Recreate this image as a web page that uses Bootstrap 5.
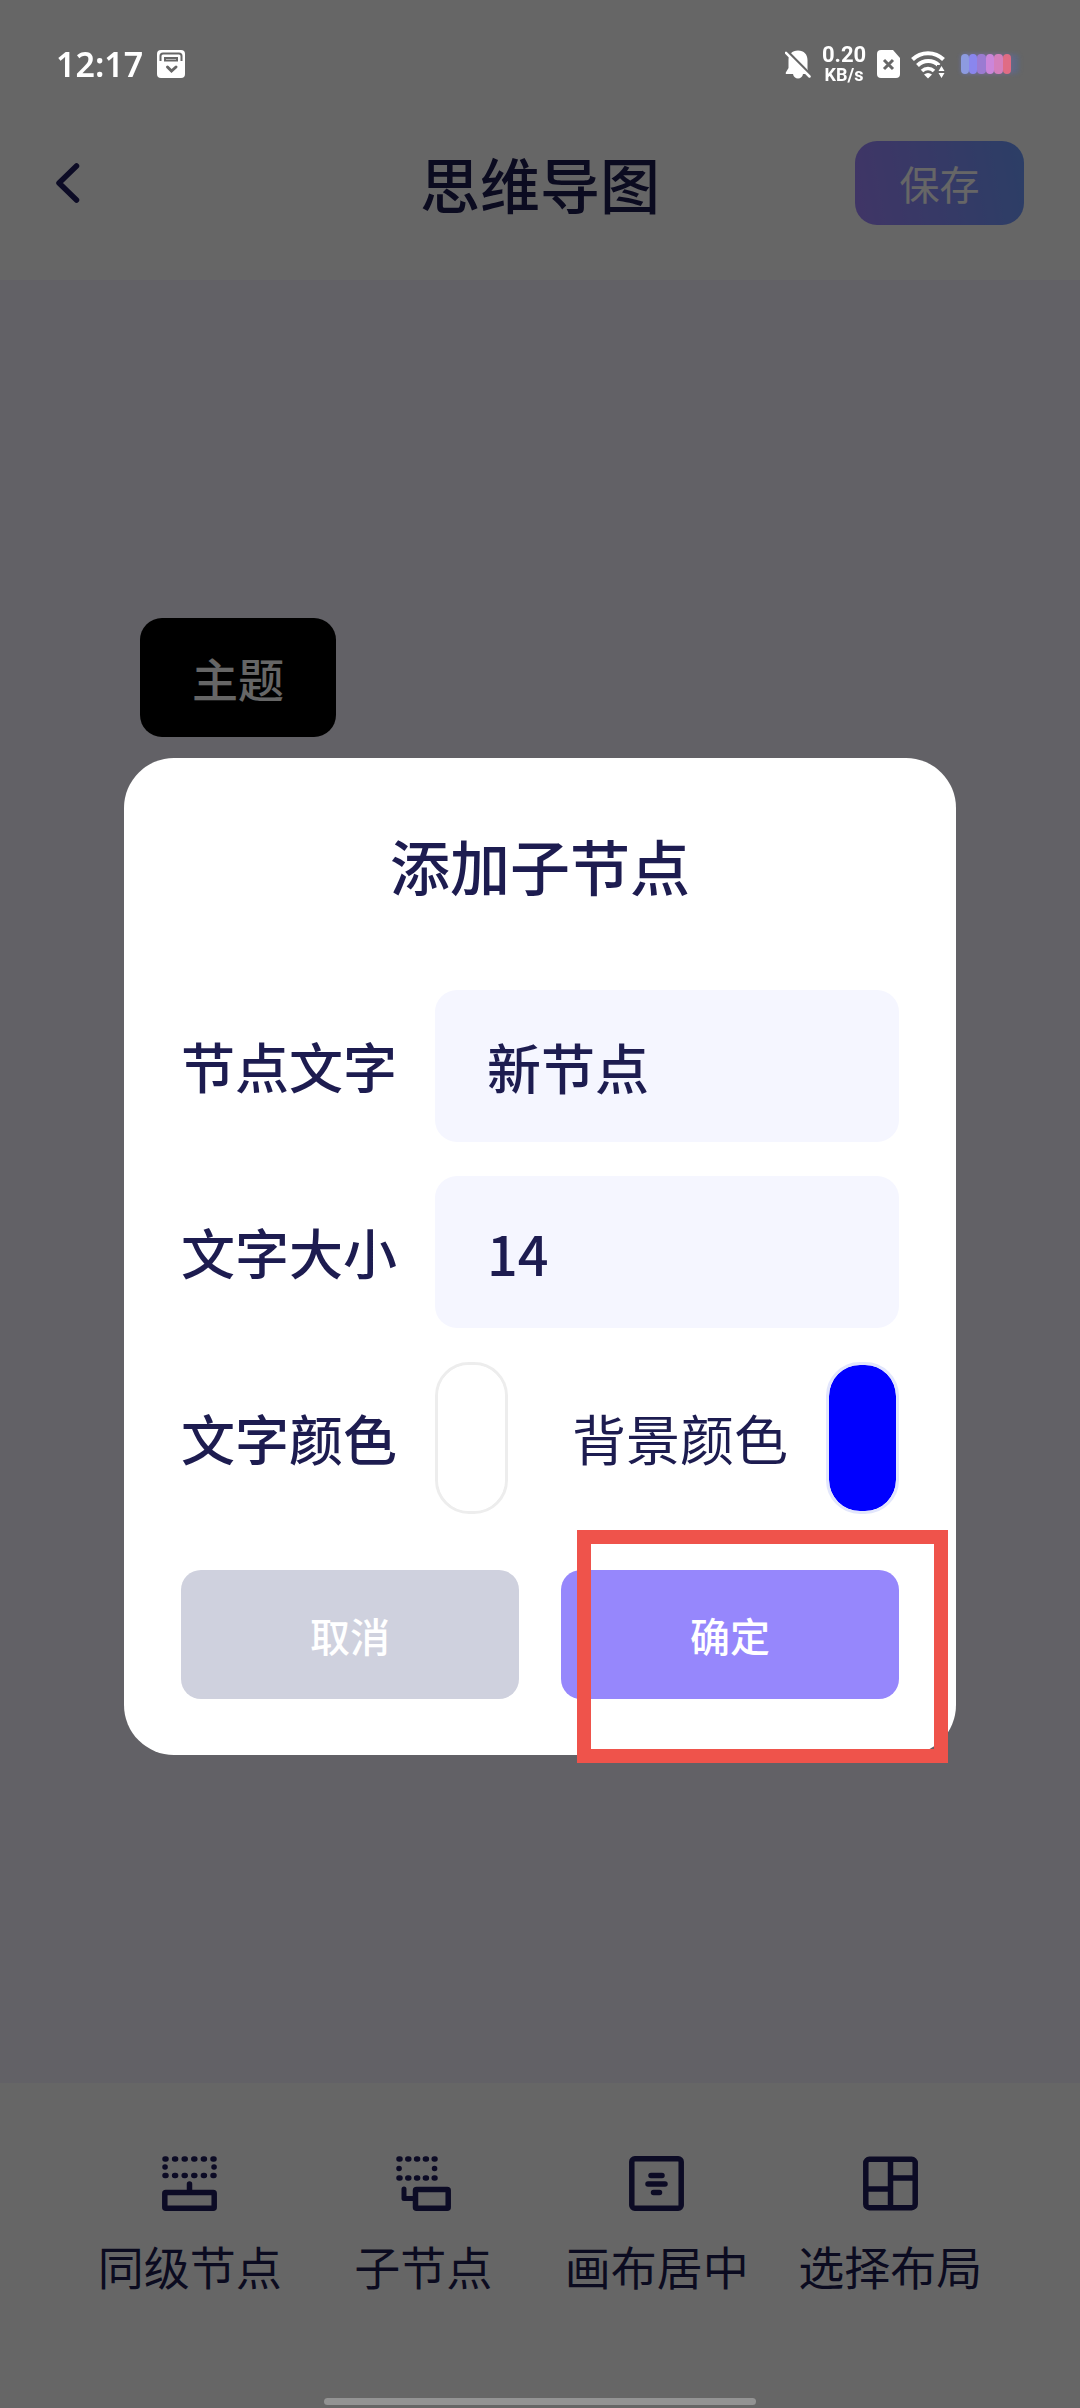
<!DOCTYPE html>
<html lang="zh-CN">
<head>
<meta charset="utf-8">
<meta name="viewport" content="width=device-width, initial-scale=1">
<title>思维导图</title>
<link href="https://cdn.jsdelivr.net/npm/bootstrap@5.3.0/dist/css/bootstrap.min.css" rel="stylesheet">
<style>
  :root { --ink: #1d1c50; }
  body { font-family: "Noto Sans CJK SC", "Noto Sans", sans-serif; color: var(--ink); background: #fff; }
  .status-bar { height: 86px; padding: 42px 56px 0; color: #fff; z-index: 1060; }
  .clock { font: 600 34px/44px "Noto Sans", sans-serif; }
  .clock-group { gap: 14px; }
  .status-icons { gap: 10px; }
  .net-speed { font: 700 22px/22px Roboto, sans-serif; width: 46px; }
  .net-speed .unit { font-size: 18px; line-height: 18px; }
  .app-header { height: 194px; padding: 0 56px; }
  .page-title { font-size: 60px; line-height: 72px; font-weight: 500; }
  .save-btn { --bs-btn-color: #fff; --bs-btn-hover-color: #fff; width: 169px; height: 84px; border: 0; border-radius: 22px; font-size: 40px; line-height: 48px;
    background: linear-gradient(80deg, #a085ff, #6e9cff); }
  .map-canvas { background: #f4f2fe; }
  .map-node { left: 140px; top: 338px; padding: 31px 52px; border-radius: 22px; background: #000; color: #fff; font-size: 46px; line-height: 57px; font-weight: 500; }
  .tool-bar { height: 325px; padding: 73px 73px 0; }
  .tool-item { font-size: 46px; line-height: 56px; gap: 26px; color: var(--ink); border: 0; }
  .home-handle { left: 30%; right: 30%; bottom: 3px; height: 7px; background: #939393; z-index: 1060; }
  .scrim { background: rgba(0, 0, 0, .6); z-index: 1050; padding: 105px 124px 0; }
  .dialog-card { border-radius: 50px; padding: 71px 57px 56px; border: 0; }
  .dialog-title { font-size: 60px; line-height: 72px; font-weight: 500; margin-bottom: 89px; }
  .form-rows { gap: 34px; margin-bottom: 56px; }
  .field-label { width: 254px; font-size: 54px; line-height: 64px; font-weight: 500; }
  .field-label-alt { font-size: 54px; line-height: 64px; margin-left: 64px; }
  .field-box, .field-box:focus { height: 152px; padding: 0 52px; border: 0; border-radius: 22px; background: #f5f6ff; color: var(--ink); font-size: 54px; font-weight: 500; }
  .color-pick { appearance: none; width: 73px; height: 152px; padding: 0; border: 3px solid #ededed; border-radius: 34px; background: none; overflow: hidden; }
  .color-pick::-webkit-color-swatch-wrapper { padding: 0; }
  .color-pick::-webkit-color-swatch { border: 0; border-radius: 31px; }
  .color-pick-fill { border-color: #e2e6fc; }
  .action-row { gap: 42px; }
  .action-cell { flex: 1 1 0; }
  .action-btn { --bs-btn-color: #fff; --bs-btn-hover-color: #fff; height: 129px; border: 0; border-radius: 20px; font-size: 40px; line-height: 48px; font-weight: 500; }
  .action-cancel, .action-cancel:hover { background: #cfd1de; }
  .action-ok, .action-ok:hover { background: #9687fc; }
  .highlight-frame { left: 16px; top: -40px; right: -49px; bottom: -64px; border: 14px solid #ef534b; pointer-events: none; }
</style>
<script src="https://cdn.jsdelivr.net/npm/bootstrap@5.3.0/dist/js/bootstrap.bundle.min.js"></script>
</head>
<body class="d-flex flex-column min-vh-100">

<div class="status-bar position-relative d-flex justify-content-between align-items-center">
  <div class="clock-group d-flex align-items-center">
    <span class="clock">12:17</span>
    <svg width="28" height="28" viewBox="0 0 28 28" aria-hidden="true">
      <rect width="28" height="28" rx="4" fill="#fff"/>
      <path d="M3.500 11V6q0-2.500 2.500-2.500h16q2.500 0 2.500 2.500v5M8 10.500V8h12v2.500z" fill="none" stroke="#666" stroke-width="2"/>
      <path d="M10.500 17l4 4 4.500-4" fill="none" stroke="#666" stroke-width="3" stroke-linecap="round"/>
    </svg>
  </div>
  <div class="status-icons d-flex align-items-center">
    <svg width="26" height="29" viewBox="0 0 26 29" aria-hidden="true">
      <path d="M13 .5c-6 0-9.500 4-9.500 9.500v8L.8 22.500V24H8c.5 2.800 2.500 4.500 5 4.500s4.500-1.700 5-4.500h6l-1.500-5V10C22.500 4.500 19 .5 13 .5z" fill="#fff"/>
      <path d="M3 2l23 23" stroke="#666" stroke-width="2.500"/>
      <path d="M1 2.800L24.500 26.500" stroke="#fff" stroke-width="2.500" stroke-linecap="round"/>
    </svg>
    <div class="net-speed d-flex flex-column text-center"><span>0.20</span><span class="unit">KB/s</span></div>
    <svg width="23" height="28" viewBox="0 0 23 28" aria-hidden="true">
      <path d="M4 0h12l7 8v16q0 4-4 4H4q-4 0-4-4V4q0-4 4-4z" fill="#fff"/>
      <path d="M7 10l9 9M16 10l-9 9" stroke="#666" stroke-width="3"/>
    </svg>
    <svg width="36" height="29" viewBox="0 0 36 29" aria-hidden="true">
      <g fill="none" stroke="#fff" stroke-width="4">
        <path d="M2.500 9.500c8.500-8.500 22.500-8.500 31 0"/>
        <path d="M7.500 15.500c6-6 15.500-6 21.500 0"/>
        <path d="M12 21c3.500-3.500 8.500-3.500 12 0" stroke-width="3.500"/>
      </g>
      <path d="M14 24.500q4-3 8 0L18 28.500z" fill="#fff"/>
      <path d="M27 29V15h9v14z" fill="#666"/>
      <path d="M28.500 21l3-5 3 5zM28.500 23l3 5 3-5z" fill="#fff"/>
    </svg>
    <svg width="68" height="28" viewBox="0 0 68 28" aria-hidden="true">
      <defs>
        <linearGradient id="glow"><stop offset="0" stop-color="#6f7cd8"/><stop offset=".6" stop-color="#8b6fc0"/><stop offset="1" stop-color="#4f6a94"/></linearGradient>
        <filter id="soft" x="-20%" y="-30%" width="140%" height="160%"><feGaussianBlur stdDeviation="2"/></filter>
      </defs>
      <rect x="5" y="4" width="58" height="20" rx="4" fill="url(#glow)" opacity=".5" filter="url(#soft)"/>
      <rect x="5" y="4" width="8" height="20" rx="4" fill="#8d9be0"/>
      <rect x="13" y="4" width="8" height="20" rx="4" fill="#8a86ee"/>
      <rect x="21" y="4" width="9" height="20" rx="4" fill="#9b7bd2"/>
      <rect x="30" y="4" width="8" height="20" rx="4" fill="#cb86da"/>
      <rect x="38" y="4" width="9" height="20" rx="4" fill="#d47fbc"/>
      <rect x="47" y="4" width="8" height="20" rx="4" fill="#e06c84"/>
    </svg>
  </div>
</div>

<header class="app-header d-flex align-items-center">
  <div class="flex-fill w-25">
    <button type="button" class="btn border-0 p-0 d-block" aria-label="返回">
      <svg class="d-block" width="24" height="40" viewBox="0 0 24 40"><path d="M20.500 3L3 20l17.500 17" fill="none" stroke="#1f1d5c" stroke-width="5.500" stroke-linecap="round" stroke-linejoin="round"/></svg>
    </button>
  </div>
  <h1 class="page-title m-0 text-nowrap">思维导图</h1>
  <div class="flex-fill w-25 text-end"><button type="button" class="btn save-btn p-0">保存</button></div>
</header>

<main class="map-canvas flex-grow-1 position-relative">
  <div class="map-node position-absolute text-nowrap">主题</div>
</main>

<nav class="tool-bar d-flex align-items-start" aria-label="工具栏">
  <button type="button" class="tool-item btn p-0 flex-fill w-25 d-flex flex-column align-items-center text-nowrap">
    <svg width="55" height="55" viewBox="0 0 55 55" aria-hidden="true">
      <g fill="none" stroke="#1f1d5c" stroke-linecap="round">
        <path d="M3 3h49M3 19.500h49" stroke-width="5.500" stroke-dasharray="1 8.600"/>
        <path d="M3 11h.1M52 11h.1" stroke-width="5.500"/>
        <path d="M27.500 28v7" stroke-width="5.500"/>
        <rect x="2.800" y="36.500" width="49.400" height="15.700" rx="1" stroke-width="5.500"/>
      </g>
    </svg>
    <span>同级节点</span>
  </button>
  <button type="button" class="tool-item btn p-0 flex-fill w-25 d-flex flex-column align-items-center text-nowrap">
    <svg width="55" height="55" viewBox="0 0 55 55" aria-hidden="true">
      <g fill="none" stroke="#1f1d5c" stroke-linecap="round">
        <path d="M3 3h36M3 22h36" stroke-width="5.500" stroke-dasharray="1 7.800"/>
        <path d="M3 12.500h.1M38.500 12.500h.1" stroke-width="5.500"/>
        <path d="M8 33v9.500h9" stroke-width="5" stroke-linejoin="round"/>
        <rect x="19.500" y="33.500" width="32.700" height="18.700" rx="1" stroke-width="5.500"/>
      </g>
    </svg>
    <span>子节点</span>
  </button>
  <button type="button" class="tool-item btn p-0 flex-fill w-25 d-flex flex-column align-items-center text-nowrap">
    <svg width="55" height="55" viewBox="0 0 55 55" aria-hidden="true">
      <g fill="none" stroke="#1f1d5c" stroke-width="5.500" stroke-linecap="round">
        <rect x="2.800" y="2.800" width="49.400" height="49.400" rx="3"/>
        <path d="M22 19.500h11M19 28h17M24.500 36.500h6"/>
      </g>
    </svg>
    <span>画布居中</span>
  </button>
  <button type="button" class="tool-item btn p-0 flex-fill w-25 d-flex flex-column align-items-center text-nowrap">
    <svg width="55" height="55" viewBox="0 0 55 55" aria-hidden="true">
      <g fill="none" stroke="#1f1d5c" stroke-width="5.500">
        <rect x="2.800" y="3.300" width="49.400" height="48.400" rx="3.500"/>
        <path d="M27.500 3v49M3 33h24.500M27.500 22H52"/>
      </g>
    </svg>
    <span>选择布局</span>
  </button>
</nav>

<div class="scrim position-fixed top-0 start-0 w-100 h-100 d-flex align-items-center">
  <form class="dialog-card card w-100" role="dialog" aria-labelledby="dialogTitle">
    <h2 class="dialog-title text-center" id="dialogTitle">添加子节点</h2>
    <div class="form-rows d-flex flex-column">
      <div class="d-flex align-items-center">
        <label class="field-label flex-shrink-0" for="nodeText">节点文字</label>
        <input class="field-box form-control" id="nodeText" type="text" value="新节点">
      </div>
      <div class="d-flex align-items-center">
        <label class="field-label flex-shrink-0" for="fontSize">文字大小</label>
        <input class="field-box form-control" id="fontSize" type="text" inputmode="numeric" value="14">
      </div>
      <div class="d-flex align-items-center">
        <label class="field-label flex-shrink-0" for="textColor">文字颜色</label>
        <input class="color-pick flex-shrink-0" id="textColor" type="color" value="#ffffff">
        <label class="field-label-alt text-nowrap" for="fillColor">背景颜色</label>
        <input class="color-pick color-pick-fill flex-shrink-0 ms-auto" id="fillColor" type="color" value="#0000ff">
      </div>
    </div>
    <div class="action-row d-flex">
      <div class="action-cell">
        <button type="button" class="btn action-btn action-cancel w-100 d-block">取消</button>
      </div>
      <div class="action-cell position-relative">
        <button type="button" class="btn action-btn action-ok w-100 d-block">确定</button>
        <div class="highlight-frame position-absolute"></div>
      </div>
    </div>
  </form>
</div>

<div class="home-handle position-fixed rounded-pill"></div>
</body>
</html>
